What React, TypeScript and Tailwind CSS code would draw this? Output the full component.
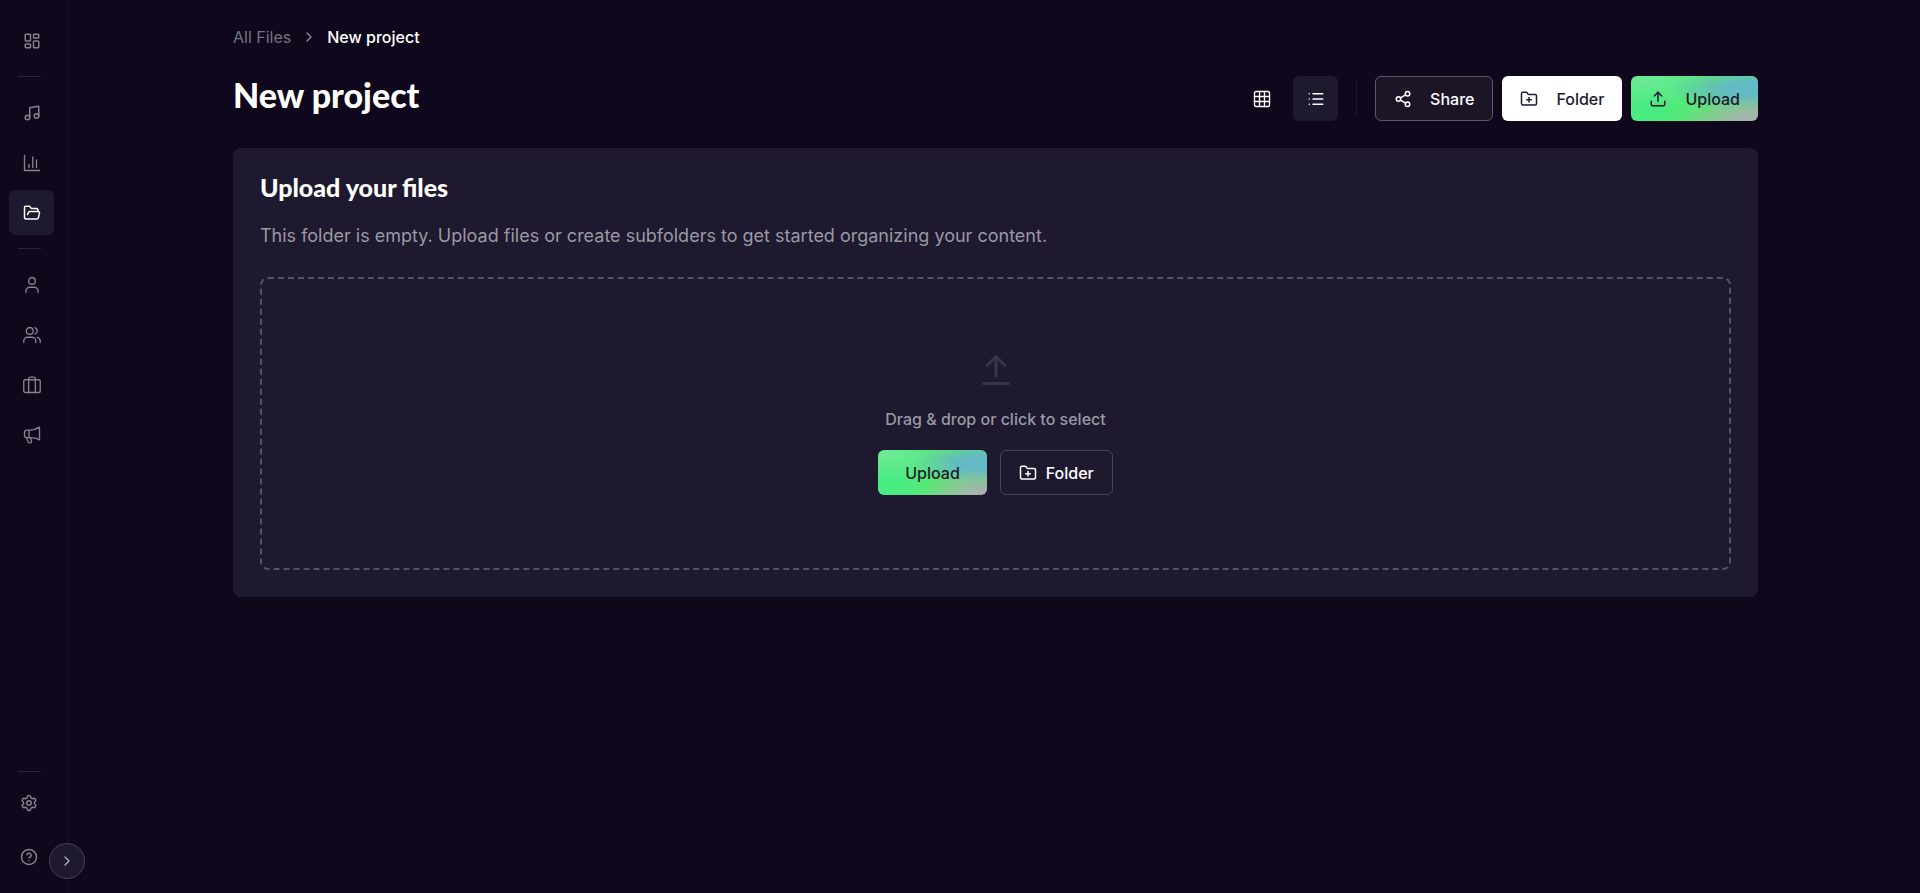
import type { ReactNode } from 'react';
import {
  ChevronRight,
  CircleHelp,
  FolderOpen,
  FolderPlus,
  LayoutDashboard,
  List,
  Music,
  Settings,
  Share2,
  Upload,
} from 'lucide-react';

function Glyph({ children }: { children: ReactNode }) {
  return (
    <svg
      width={18}
      height={18}
      viewBox="0 0 24 24"
      fill="none"
      stroke="currentColor"
      strokeWidth={1.8}
      strokeLinecap="round"
      strokeLinejoin="round"
      aria-hidden="true"
    >
      {children}
    </svg>
  );
}

const ChartIcon = () => (
  <Glyph>
    <path d="M2 2v20h20" />
    <path d="M8 18v-4M13 18V4M18 18V8" />
  </Glyph>
);

const UserIcon = () => (
  <Glyph>
    <circle cx="12" cy="6.5" r="4.5" />
    <path d="M4 22v-2a5 5 0 0 1 5-5h6a5 5 0 0 1 5 5v2" />
  </Glyph>
);

const UsersIcon = () => (
  <Glyph>
    <circle cx="9" cy="6.5" r="4.5" />
    <path d="M1 22v-2a5 5 0 0 1 5-5h6a5 5 0 0 1 5 5v2" />
    <path d="M16 2.3a4.5 4.5 0 0 1 0 8.5M23 22v-2a5 5 0 0 0-4-4.8" />
  </Glyph>
);

const SuitcaseIcon = () => (
  <Glyph>
    <rect x="1" y="5" width="22" height="17" rx="2" />
    <path d="M7.5 22V4A2.5 2.5 0 0 1 10 1.5h4A2.5 2.5 0 0 1 16.5 4v18" />
  </Glyph>
);

const MegaphoneIcon = () => (
  <Glyph>
    <path d="M22 1.500v17c-4-2.500-8-3-12-3H5a3 3 0 0 1-3-3V8.500a3 3 0 0 1 3-3h5c4 0 8-1.500 12-4z" />
    <path d="M8 5.500v10M5 15.500l1.700 5.600a2 2 0 0 0 1.900 1.400h1.200a1.600 1.600 0 0 0 1.500-2L10 15.500" />
  </Glyph>
);

const GridIcon = () => (
  <Glyph>
    <rect x="2" y="2" width="20" height="20" rx="2" />
    <path d="M2 8.700h20M2 15.300h20M8.700 2v20M15.300 2v20" />
  </Glyph>
);

const navGroups = [
  [{ label: 'Dashboard', icon: <LayoutDashboard size={18} />, active: false }],
  [
    { label: 'Music', icon: <Music size={18} />, active: false },
    { label: 'Analytics', icon: <ChartIcon />, active: false },
    { label: 'Files', icon: <FolderOpen size={18} />, active: true },
  ],
  [
    { label: 'Profile', icon: <UserIcon />, active: false },
    { label: 'Team', icon: <UsersIcon />, active: false },
    { label: 'Business', icon: <SuitcaseIcon />, active: false },
    { label: 'Promotion', icon: <MegaphoneIcon />, active: false },
  ],
];

function Sidebar() {
  return (
    <aside className="relative flex min-h-screen w-[68px] shrink-0 flex-col border-r border-[#181124] pt-[18px] pb-3.5 text-[#85828c]">
      <nav aria-label="Main" className="flex flex-col">
        {navGroups.map((group, i) => (
          <div key={i} className="flex flex-col">
            {i > 0 && <hr className="my-[13px] ml-[18px] w-[23px] border-[#2a2438]" />}
            <div className="flex flex-col gap-[5px] pl-[9px]">
              {group.map((item) => (
                <a
                  key={item.label}
                  href="#"
                  aria-label={item.label}
                  className={
                    item.active
                      ? 'flex size-[45px] items-center justify-center rounded-md bg-[#1e192e] text-white'
                      : 'flex size-[45px] items-center justify-center rounded-md'
                  }
                >
                  {item.icon}
                </a>
              ))}
            </div>
          </div>
        ))}
      </nav>
      <div className="mt-auto flex flex-col">
        <hr className="mb-2 ml-[18px] w-[23px] border-[#2a2438]" />
        <div className="flex flex-col gap-[9px] pl-[7px]">
          <a href="#" aria-label="Settings" className="flex h-[45px] w-11 items-center justify-center">
            <Settings size={18} />
          </a>
          <a href="#" aria-label="Help" className="flex h-[45px] w-11 items-center justify-center">
            <CircleHelp size={18} />
          </a>
        </div>
      </div>
      <button
        type="button"
        aria-label="Expand sidebar"
        className="absolute -right-[18px] bottom-3.5 flex size-9 items-center justify-center rounded-full border border-[#474355] bg-[#1e192e] text-[#b0aeb6]"
      >
        <ChevronRight size={16} />
      </button>
    </aside>
  );
}

const gradient =
  'bg-[radial-gradient(ellipse_at_100%_100%,#a5b3ae_0%,#a5b3ae_10%,transparent_42%),radial-gradient(ellipse_at_100%_30%,#63b9c4_0%,#63b9c4_18%,transparent_50%),radial-gradient(ellipse_at_10%_10%,#6cea94_0%,transparent_45%),linear-gradient(100deg,#49ec82_20%,#5ee672_60%)]';

export default function App() {
  return (
    <div className="flex min-h-screen bg-[#0f071c] font-['Inter',sans-serif] text-white">
      <Sidebar />
      <main className="min-w-0 flex-1 pl-[3px]">
        <div className="mx-auto max-w-[1525px] pt-6">
          <nav aria-label="Breadcrumb" className="flex items-center gap-2.5 text-base leading-[26px]">
            <a href="#" className="text-[#77737f]">All Files</a>
            <ChevronRight size={16} className="text-[#8b8892]" aria-hidden="true" />
            <span className="font-medium">New project</span>
          </nav>

          <header className="mt-[26px] flex flex-wrap items-start justify-between gap-4">
            <h1 className="font-['Lato',sans-serif] text-[34px] leading-[38px] font-black">New project</h1>
            <div className="flex items-center gap-[9px]">
              <button type="button" aria-label="Grid view" className="flex size-[45px] items-center justify-center rounded-md">
                <GridIcon />
              </button>
              <button type="button" aria-label="List view" className="flex size-[45px] items-center justify-center rounded-md bg-[#1e192e]">
                <List size={18} />
              </button>
              <div className="mx-[9px] h-9 w-px bg-[#1e192e]" />
              <button type="button" className="flex h-[45px] items-center gap-[18px] rounded-md border border-[#5c5867] bg-[#1c1528] px-[18px] font-medium">
                <Share2 size={18} />
                Share
              </button>
              <button type="button" className="flex h-[45px] items-center gap-[18px] rounded-md bg-white px-[18px] font-medium text-[#1e192e]">
                <FolderPlus size={18} />
                Folder
              </button>
              <button type="button" className={`flex h-[45px] items-center gap-[18px] rounded-md px-[18px] font-medium text-[#1e192e] ${gradient}`}>
                <Upload size={18} />
                Upload
              </button>
            </div>
          </header>

          <section className="mt-[27px] rounded-lg bg-[#1e192e] p-[27px] pt-[22px]">
            <h2 className="font-['Lato',sans-serif] text-[25px] leading-[34px] font-black">Upload your files</h2>
            <p className="mt-[17px] text-lg leading-[30px] text-[#9a98a3]">
              This folder is empty. Upload files or create subfolders to get started organizing your content.
            </p>
            <div className="mt-[26px] flex min-h-[293px] flex-col items-center justify-center rounded-lg border-2 border-dashed border-[#4b5563]">
              <svg width="36" height="36" viewBox="0 0 24 24" fill="none" stroke="#393449" strokeWidth="2" aria-hidden="true">
                <path d="M12 17V3M5.500 9.500 12 3l6.500 6.500M3 21h18" />
              </svg>
              <p className="mt-[19px] text-base font-medium text-[#9a98a3]">Drag &amp; drop or click to select</p>
              <div className="mt-[19px] flex gap-[13px]">
                <button type="button" className={`h-[45px] rounded-md px-[27px] font-medium text-[#1e192e] ${gradient}`}>
                  Upload
                </button>
                <button type="button" className="flex h-[45px] items-center gap-[9px] rounded-md border border-[#474355] px-[18px] font-medium">
                  <FolderPlus size={18} />
                  Folder
                </button>
              </div>
            </div>
          </section>
        </div>
      </main>
    </div>
  );
}
